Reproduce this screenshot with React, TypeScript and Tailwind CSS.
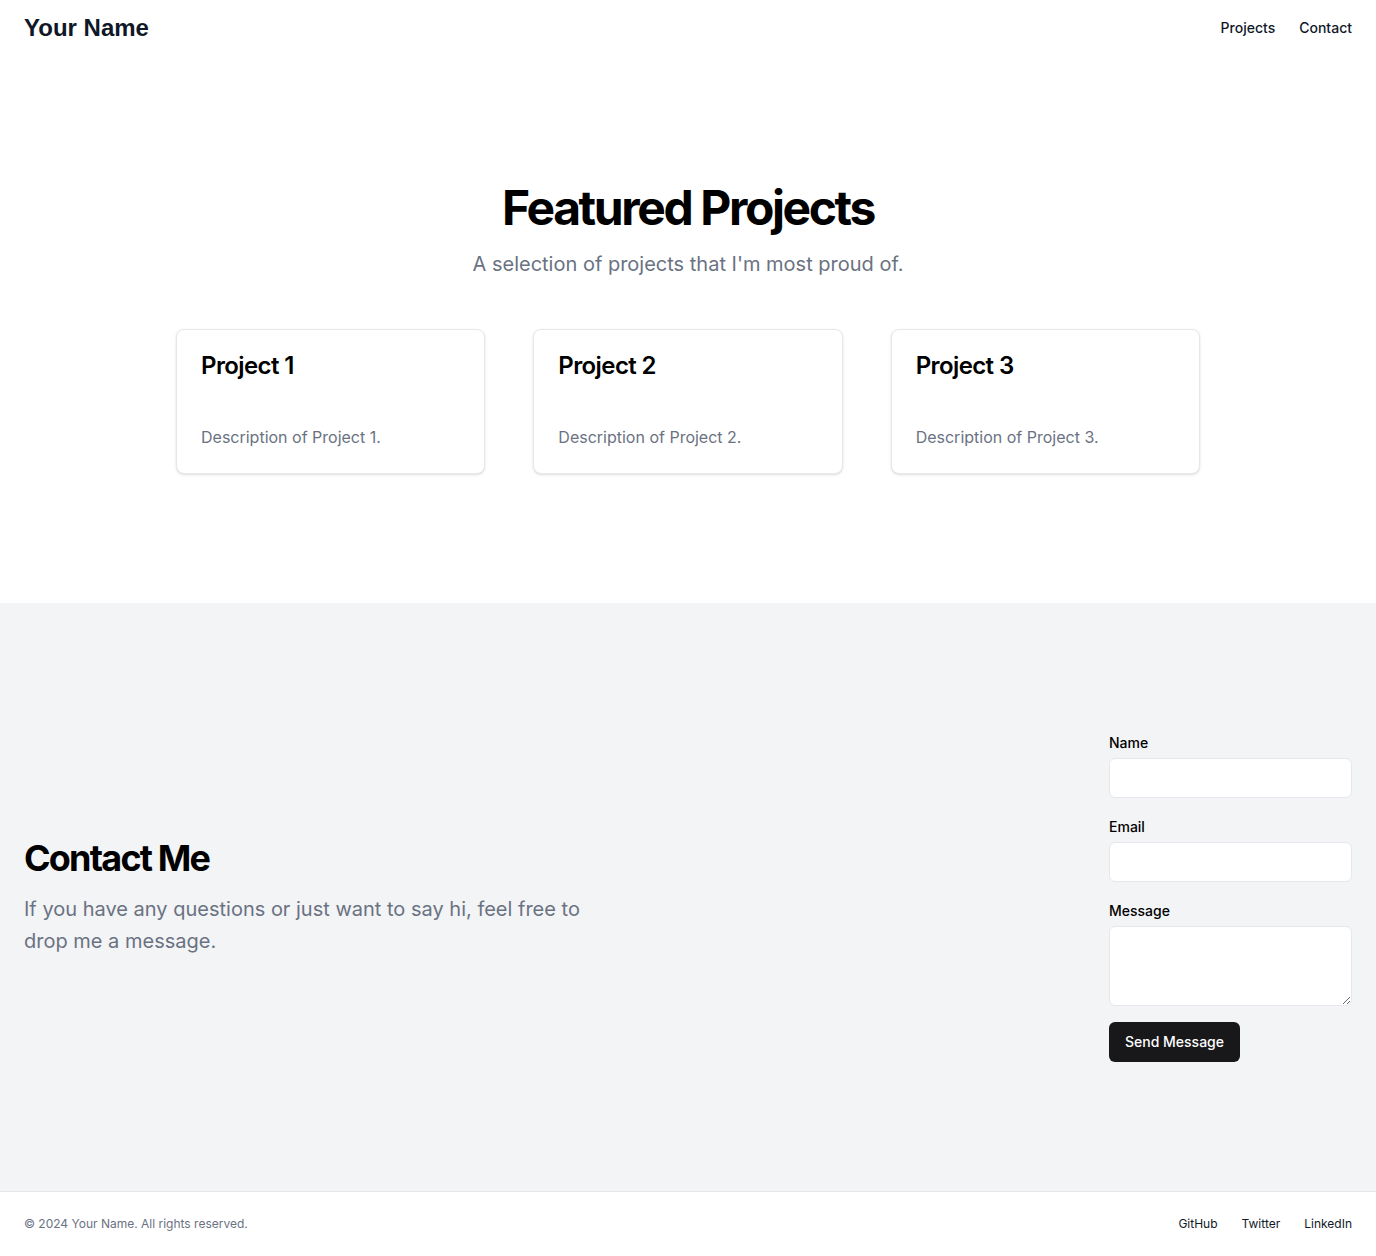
import React from "react";

export default function App() {
  const inter = { fontFamily: "Inter, 'Noto Sans', sans-serif" };
  return (
    <div className="min-h-screen bg-white flex flex-col" style={inter}>
      <header className="h-14 px-6 flex items-center justify-between">
        <a
          className="text-2xl font-bold text-gray-900"
          style={{ fontFamily: "'Liberation Sans', Arial, sans-serif" }}
        >
          Your Name
        </a>
        <nav className="flex gap-6 text-sm font-medium text-gray-900">
          <a>Projects</a>
          <a>Contact</a>
        </nav>
      </header>

      <section className="pt-32 pb-[129px] px-6">
        <div className="flex flex-col items-center text-center">
          <h2 className="text-5xl leading-none font-bold tracking-tighter text-black">
            Featured Projects
          </h2>
          <p className="mt-4 text-xl leading-8 text-gray-500">
            A selection of projects that I'm most proud of.
          </p>
        </div>
        <div className="mx-auto mt-[49px] grid max-w-5xl grid-cols-3 gap-12">
          {[1, 2, 3].map((n) => (
            <div
              key={n}
              className="rounded-lg border border-gray-200 bg-white shadow-sm p-6"
            >
              <h3 className="text-2xl leading-none font-semibold tracking-tight text-black">
                Project {n}
              </h3>
              <p className="mt-[47px] text-base leading-6 text-gray-500">
                Description of Project {n}.
              </p>
            </div>
          ))}
        </div>
      </section>

      <section className="bg-gray-100 h-[588px] px-6 flex items-center justify-between">
        <div className="max-w-[600px]">
          <h2 className="text-4xl font-bold tracking-tighter text-black">
            Contact Me
          </h2>
          <p className="mt-[15px] text-xl leading-8 text-gray-500">
            If you have any questions or just want to say hi, feel free to drop
            me a message.
          </p>
        </div>
        <form className="w-[243px] flex flex-col gap-[19px]">
          <div className="flex flex-col gap-[5px]">
            <label className="text-sm font-medium text-black">Name</label>
            <input className="h-10 rounded-md border border-gray-200 bg-white px-3 text-sm" />
          </div>
          <div className="flex flex-col gap-[5px]">
            <label className="text-sm font-medium text-black">Email</label>
            <input className="h-10 rounded-md border border-gray-200 bg-white px-3 text-sm" />
          </div>
          <div className="flex flex-col gap-[5px]">
            <label className="text-sm font-medium text-black">Message</label>
            <textarea className="h-20 min-h-[80px] rounded-md border border-gray-200 bg-white px-3 py-2 text-sm" />
          </div>
          <button
            type="button"
            className="mt-[-3px] h-10 self-start rounded-md bg-[#18181b] px-4 text-sm font-medium text-white"
          >
            Send Message
          </button>
        </form>
      </section>

      <footer className="border-t border-gray-200 py-6 px-6 flex items-center justify-between">
        <p className="text-xs text-gray-500">© 2024 Your Name. All rights reserved.</p>
        <nav className="flex gap-6 text-xs text-gray-900">
          <a>GitHub</a>
          <a>Twitter</a>
          <a>LinkedIn</a>
        </nav>
      </footer>
    </div>
  );
}
